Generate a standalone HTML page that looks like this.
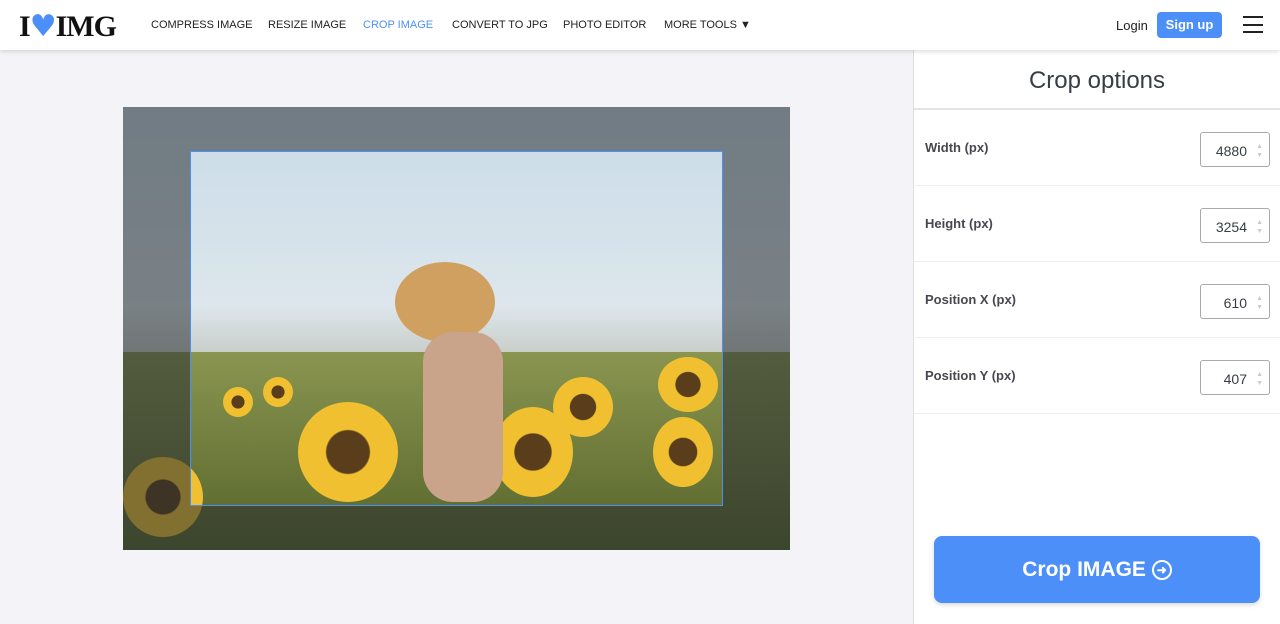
<!DOCTYPE html>
<html><head><meta charset="utf-8"><style>
*{box-sizing:border-box;margin:0;padding:0}
body{width:1280px;height:624px;overflow:hidden;background:#f4f4f8;font-family:"Liberation Sans",sans-serif;color:#383e45;position:relative}
.hdr{position:absolute;left:0;top:0;width:1280px;height:50px;background:#fff;box-shadow:0 2px 4px rgba(0,0,0,.12);z-index:5}
.logo{position:absolute;left:19px;top:9px;font-family:"Liberation Serif",serif;font-weight:bold;font-size:30px;color:#111;letter-spacing:-1px}
.nav{position:absolute;top:19px;font-size:11px;color:#222;letter-spacing:0}
.side{position:absolute;left:913px;top:50px;width:367px;height:574px;background:#fff;border-left:1px solid #ddd}
.side h2{font-weight:normal;font-size:24px;text-align:center;height:60px;line-height:62px;border-bottom:2px solid #e3e3e3;color:#383e45}
.row{height:76px;border-bottom:1px solid #eee;position:relative}
.row span{position:absolute;left:11px;top:30px;font-size:13px;font-weight:bold;color:#47474f}
.inp{position:absolute;left:286px;top:22px;width:70px;height:35px;border:1px solid #aaa;border-radius:3px;font-size:14px;text-align:right;padding:10px 22px 0 0;color:#383e45}
.inp:after{content:"▲\A▼";white-space:pre;position:absolute;right:6px;top:9px;font-size:7px;line-height:9px;color:#ccc}
.btn{position:absolute;left:20px;top:486px;width:326px;height:67px;background:#4d8ff9;border-radius:8px;box-shadow:0 2px 5px rgba(0,0,0,.15);color:#fff;font-size:21px;font-weight:bold;text-align:center;line-height:67px}
.img{position:absolute;left:123px;top:107px;width:667px;height:443px;overflow:hidden;background:linear-gradient(#c8dbe8 0%,#dde6ec 45%,#c8cdc8 56%,#8c9a5a 62%,#6f7e3a 80%,#5a6a30 100%)}
.flow{position:absolute;border-radius:50%;background:radial-gradient(circle,#5a3d1a 0 30%,#f0c030 32% 100%)}
.dark{position:absolute;background:rgba(40,45,50,.55)}
</style></head><body>
<div class="hdr">
 <div class="logo">I<span style="color:#4d8ff9;font-family:'DejaVu Sans'">♥</span>IMG</div>
 <div class="nav" style="left:151px">COMPRESS IMAGE</div>
 <div class="nav" style="left:268px">RESIZE IMAGE</div>
 <div class="nav" style="left:363px;color:#4d8ff9">CROP IMAGE</div>
 <div class="nav" style="left:452px">CONVERT TO JPG</div>
 <div class="nav" style="left:563px">PHOTO EDITOR</div>
 <div class="nav" style="left:664px">MORE TOOLS ▼</div>
 <div style="position:absolute;left:1116px;top:18px;font-size:13px;color:#222">Login</div>
 <div style="position:absolute;left:1157px;top:12px;width:65px;height:26px;background:#4d8ff9;border-radius:4px;color:#fff;font-size:13px;font-weight:bold;text-align:center;line-height:26px">Sign up</div>
 <div style="position:absolute;left:1243px;top:16px;width:20px;height:17px;border-top:2px solid #222;border-bottom:2px solid #222"><div style="margin-top:5.5px;height:2px;background:#222"></div></div>
</div>
<div class="img">
 <div style="position:absolute;left:0;top:245px;width:667px;height:198px;background:linear-gradient(#8a9550,#55642a)"></div>
 <div class="flow" style="left:175px;top:295px;width:100px;height:100px"></div>
 <div class="flow" style="left:370px;top:300px;width:80px;height:90px"></div>
 <div class="flow" style="left:430px;top:270px;width:60px;height:60px"></div>
 <div class="flow" style="left:530px;top:310px;width:60px;height:70px"></div>
 <div class="flow" style="left:535px;top:250px;width:60px;height:55px"></div>
 <div class="flow" style="left:0;top:350px;width:80px;height:80px"></div>
 <div class="flow" style="left:140px;top:270px;width:30px;height:30px"></div>
 <div class="flow" style="left:100px;top:280px;width:30px;height:30px"></div>
 <div style="position:absolute;left:272px;top:155px;width:100px;height:80px;border-radius:50%;background:#d0a060"></div>
 <div style="position:absolute;left:300px;top:225px;width:80px;height:170px;border-radius:30px;background:#c9a48a"></div>
 <div class="dark" style="left:0;top:0;width:667px;height:44px"></div>
 <div class="dark" style="left:0;top:399px;width:667px;height:44px"></div>
 <div class="dark" style="left:0;top:44px;width:67px;height:355px"></div>
 <div class="dark" style="left:600px;top:44px;width:67px;height:355px"></div>
 <div style="position:absolute;left:67px;top:44px;width:533px;height:355px;border:1px solid #4d8ff9"></div>
</div>
<div class="side">
 <h2>Crop options</h2>
 <div class="row"><span>Width (px)</span><div class="inp">4880</div></div>
 <div class="row"><span>Height (px)</span><div class="inp">3254</div></div>
 <div class="row"><span>Position X (px)</span><div class="inp">610</div></div>
 <div class="row"><span>Position Y (px)</span><div class="inp">407</div></div>
 <div class="btn">Crop IMAGE <span style="display:inline-block;width:20px;height:20px;border:2px solid #fff;border-radius:50%;font-size:12px;line-height:16px;vertical-align:2px">➜</span></div>
</div>
</body></html>
